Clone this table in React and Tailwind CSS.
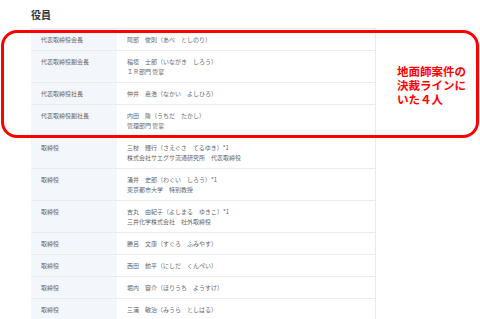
import React from "react";

const rows = [
  ["代表取締役会長", ["阿部　俊則（あべ　としのり）"]],
  ["代表取締役副会長", ["稲垣　士郎（いながき　しろう）", "ＩＲ部門 管掌"]],
  ["代表取締役社長", ["仲井　嘉浩（なかい　よしひろ）"]],
  ["代表取締役副社長", ["内田　隆（うちだ　たかし）", "管理部門 管掌"]],
  ["取締役", ["三枝　輝行（さえぐさ　てるゆき）*1", "株式会社サエグサ流通研究所　代表取締役"]],
  ["取締役", ["涌井　史郎（わくい　しろう）*1", "東京都市大学　特別教授"]],
  ["取締役", ["吉丸　由紀子（よしまる　ゆきこ）*1", "三井化学株式会社　社外取締役"]],
  ["取締役", ["勝呂　文康（すぐろ　ふみやす）"]],
  ["取締役", ["西田　勲平（にしだ　くんぺい）"]],
  ["取締役", ["堀内　容介（ほりうち　ようすけ）"]],
  ["取締役", ["三浦　敏治（みうら　としはる）"]],
];

export default function App() {
  return (
    <div
      className="relative w-[480px] h-[319px] overflow-hidden bg-white"
      style={{ fontFamily: '"Noto Sans CJK JP", "Noto Sans", sans-serif' }}
    >
      <div className="pl-[31px] pt-[9px] text-[10px] leading-[12px] font-bold text-[#333333]">
        役員
      </div>
      <div className="ml-[31px] mt-[7px] w-[345px] border-t border-r border-[#ebebeb]">
        {rows.map(([role, lines], i) => (
          <div key={i} className="flex border-b border-[#ebebeb] text-[6px] leading-[10px] text-[#666666]">
            <div className="w-[86px] shrink-0 bg-[#f3f6fa] pl-[10px] pt-[6px] pb-[5px]">{role}</div>
            <div className="flex-1 pl-[10px] pt-[6px] pb-[5px] whitespace-nowrap">
              {lines.map((l, j) => (
                <div key={j}>{l}</div>
              ))}
            </div>
          </div>
        ))}
      </div>
      <div className="absolute left-[1px] top-[30px] w-[478px] h-[108px] border-[3px] border-[#ff0000] rounded-[16px]" />
      <div className="absolute left-[397px] top-[64px] text-[11.5px] leading-[14px] font-bold text-[#ff0000]">
        <div>地面師案件の</div>
        <div>決裁ラインに</div>
        <div>いた４人</div>
      </div>
    </div>
  );
}
